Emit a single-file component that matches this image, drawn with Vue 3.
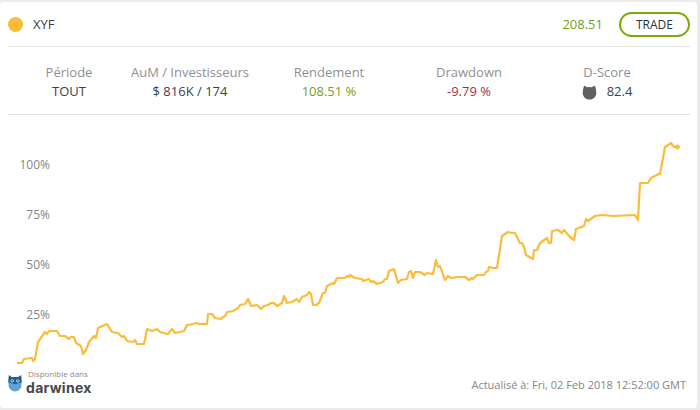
<script setup>
const line = "17,363 22,363 24,359 32,358 33,361 35,359 38,342 45,332 47,334 49,331 57,331 60,336 65,336 69,339 71,337 74,337 76,343 81,346 83,354 86,350 89,342 94,336 96,338 98,328 107,324 112,332 118,333 122,337 124,336 127,341 133,342 135,340 137,344 144,344 147,329 152,331 157,329 160,332 168,334 172,329 175,333 184,331 187,325 193,324 197,323 199,324 207,324 208,314 212,314 215,318 221,319 223,317 225,316 227,312 233,311 238,308 240,305 245,304 248,299 251,306 257,305 261,309 264,306 268,305 271,303 274,303 277,306 282,303 284,296 287,303 292,302 297,299 299,302 302,297 307,295 309,292 311,294 313,305 316,305 319,303 323,293 325,293 327,286 333,283 334,284 337,278 340,278 345,278 347,276 349,277 350,275 355,278 362,279 363,281 369,279 371,282 373,281 377,284 383,282 385,279 387,279 389,271 394,269 398,283 401,280 407,279 409,272 411,271 413,278 415,272 420,272 425,275 427,273 433,274 436,260 438,267 440,266 445,280 448,276 451,278 458,277 465,277 469,280 472,278 473,279 477,275 484,275 486,272 488,271 489,267 493,268 497,268 502,236 508,232 512,233 515,233 520,243 522,243 524,247 526,255 533,259 534,250 537,250 540,243 547,238 549,243 551,243 552,231 558,230 562,233 564,230 570,237 574,240 576,229 584,226 586,219 588,221 595,216 602,215 613,216 635,215 638,220 640,183 648,183 651,178 653,177 659,174 660,174 665,147 671,143 674,147 677,147";
const ticks = [
  { y: 169, t: "100%" },
  { y: 219, t: "75%" },
  { y: 269, t: "50%" },
  { y: 319, t: "25%" },
];
const stats = [
  { label: "Période", value: "TOUT" },
  { label: "AuM / Investisseurs", value: "$ 816K / 174" },
  { label: "Rendement", value: "108.51 %", cls: "up" },
  { label: "Drawdown", value: "-9.79 %", cls: "down" },
];
</script>

<template>
  <div class="card">
    <header class="head">
      <span class="dot"></span>
      <span class="name">XYF</span>
      <span class="price">208.51</span>
      <button class="trade">TRADE</button>
    </header>
    <section class="stats">
      <div v-for="s in stats" :key="s.label" class="stat">
        <div class="label">{{ s.label }}</div>
        <div class="value" :class="s.cls">{{ s.value }}</div>
      </div>
      <div class="stat">
        <div class="label">D-Score</div>
        <div class="value score">
          <svg width="15" height="16" viewBox="0 0 16 16">
            <path d="M2.2 1 L5.4 3 Q8 2.4 10.6 3 L13.8 1 Q14.6 3.6 15 6 Q16 10 14 13 Q12 16 8 16 Q4 16 2 13 Q0 10 1 6 Q1.4 3.6 2.2 1 Z" fill="#5f6064" />
          </svg>
          <span>82.4</span>
        </div>
      </div>
    </section>
    <div class="chart">
      <svg width="697" height="293" viewBox="0 115 697 293">
        <text v-for="t in ticks" :key="t.t" x="50" :y="t.y" text-anchor="end" class="tick">{{ t.t }}</text>
        <polyline :points="line" fill="none" stroke="#fdbb3a" stroke-width="2.2" stroke-linejoin="round" />
        <circle cx="677.5" cy="147" r="2.4" fill="#fdbb3a" />
      </svg>
      <div class="brand">
        <svg class="owl" width="14" height="18" viewBox="0 0 16 20">
          <path d="M1 1 L4.5 3.5 Q8 2.6 11.5 3.5 L15 1 L15.6 10 Q15.6 19.6 8 19.6 Q.4 19.6 .4 10 Z" fill="#5da3d4" />
          <path d="M1 1 L4.5 3.5 Q8 2.6 11.5 3.5 L15 1 L15.6 9 L8 11.5 L.4 9 Z" fill="#1f5f8f" />
          <circle cx="4.8" cy="7.5" r="1.9" fill="#cfe6f5" />
          <circle cx="11.2" cy="7.5" r="1.9" fill="#cfe6f5" />
          <circle cx="4.8" cy="7.5" r=".9" fill="#17384f" />
          <circle cx="11.2" cy="7.5" r=".9" fill="#17384f" />
        </svg>
        <div class="brand-text">
          <div class="avail">Disponible dans</div>
          <div class="logo">darwinex</div>
        </div>
      </div>
      <div class="updated">Actualisé à: Fri, 02 Feb 2018 12:52:00 GMT</div>
    </div>
  </div>
</template>

<style>
html {
  background: #ececec;
}
</style>

<style scoped>
.card {
  box-sizing: border-box;
  width: 697px;
  height: 406px;
  margin-top: 2px;
  background: #fff;
  border-radius: 4px;
  font-family: "Open Sans", sans-serif;
  font-size: 13px;
  color: #3a3f4a;
  overflow: hidden;
}
.head {
  display: flex;
  align-items: center;
  height: 44px;
  margin: 0 7px 0 8px;
  border-bottom: 1px solid #e2e2e2;
}
.dot {
  width: 15px;
  height: 15px;
  border-radius: 50%;
  background: #fdbb3a;
}
.name {
  margin-left: 10px;
}
.price {
  margin-left: auto;
  color: #76a021;
  font-size: 13px;
}
.trade {
  box-sizing: border-box;
  margin-left: 16px;
  width: 71px;
  height: 25px;
  background: #fff;
  border: 2px solid #7fa80e;
  border-radius: 13px;
  font: 12px "Open Sans", sans-serif;
  color: #2b2f38;
  padding: 0;
}
.stats {
  display: grid;
  grid-template-columns: 122px 120px 158px 122px 154px;
  align-content: start;
  height: 68px;
  padding-top: 16px;
  margin: 0 7px 0 8px;
  border-bottom: 1px solid #e2e2e2;
  box-sizing: border-box;
}
.stat {
  text-align: center;
  line-height: 19px;
}
.label {
  color: #8f9094;
}
.up {
  color: #76a021;
}
.down {
  color: #b02a37;
}
.score {
  display: flex;
  justify-content: center;
  align-items: center;
  gap: 10px;
}
.chart {
  position: relative;
  height: 293px;
}
.chart svg {
  display: block;
}
.tick {
  font: 12px "Open Sans", sans-serif;
  fill: #85868a;
}
.brand {
  position: absolute;
  left: 8px;
  bottom: 12px;
  display: flex;
  align-items: flex-end;
  gap: 4px;
}
.chart .owl {
  margin-bottom: 4px;
}
.brand-text {
  line-height: 1;
}
.avail {
  font-size: 8px;
  color: #8a8a8a;
  margin-left: 2px;
}
.logo {
  font: 700 14px "Inter", sans-serif;
  color: #45474c;
  letter-spacing: .3px;
  margin-top: 1px;
}
.updated {
  position: absolute;
  right: 11px;
  bottom: 16px;
  font-size: 11px;
  color: #85868a;
}
</style>
